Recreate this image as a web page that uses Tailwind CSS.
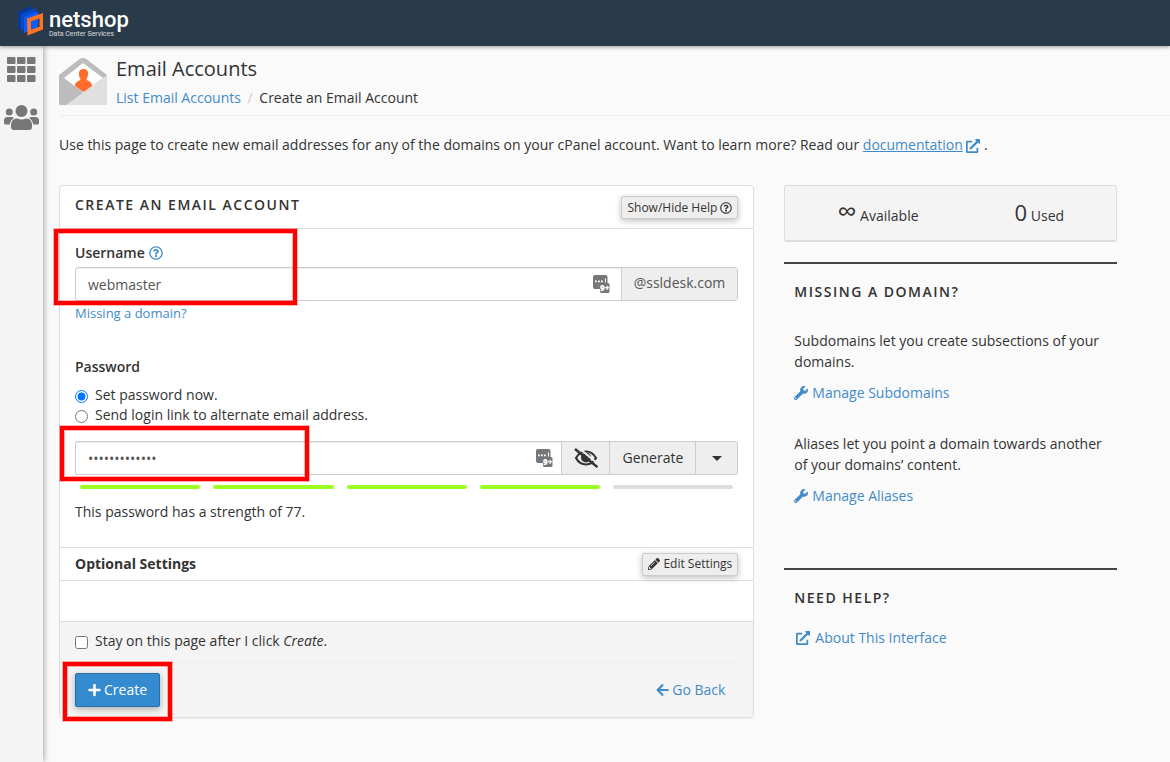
<!DOCTYPE html>
<html lang="en">
<head>
    <meta charset="UTF-8">
    <meta name="viewport" content="width=device-width, initial-scale=1.0">
    <title>Email Accounts</title>
    <script src="https://cdn.jsdelivr.net/npm/@tailwindcss/browser@4"></script>
</head>
<body class="min-h-screen flex flex-col bg-[#fafafa] font-['Open_Sans',sans-serif] text-sm leading-5 text-[#333]">

    <!-- shared icons -->
    <svg class="hidden">
        <symbol id="help" viewBox="0 0 512 512"><path d="M256 8C119.043 8 8 119.083 8 256c0 136.997 111.043 248 248 248s248-111.003 248-248C504 119.083 392.957 8 256 8zm0 448c-110.532 0-200-89.431-200-200 0-110.495 89.472-200 200-200 110.491 0 200 89.471 200 200 0 110.53-89.431 200-200 200zm107.244-255.2c0 67.052-72.421 68.084-72.421 92.863V300c0 6.627-5.373 12-12 12h-45.647c-6.627 0-12-5.373-12-12v-8.659c0-35.745 27.1-50.034 47.579-61.516 17.561-9.845 28.324-16.541 28.324-29.579 0-17.246-21.999-28.693-39.784-28.693-23.189 0-33.894 10.977-48.942 29.969-4.057 5.12-11.46 6.071-16.666 2.124l-27.824-21.098c-5.107-3.872-6.251-11.066-2.644-16.363C184.846 131.491 214.94 112 261.794 112c49.071 0 101.45 38.304 101.45 88.8zM298 368c0 23.159-18.841 42-42 42s-42-18.841-42-42 18.841-42 42-42 42 18.841 42 42z"/></symbol>
        <symbol id="external" viewBox="0 0 512 512"><path d="M432,320H400a16,16,0,0,0-16,16V448H64V128H208a16,16,0,0,0,16-16V80a16,16,0,0,0-16-16H48A48,48,0,0,0,0,112V464a48,48,0,0,0,48,48H400a48,48,0,0,0,48-48V336A16,16,0,0,0,432,320ZM488,0h-128c-21.37,0-32.05,25.91-17,41l35.73,35.73L135,320.37a24,24,0,0,0,0,34L157.67,377a24,24,0,0,0,34,0L435.28,133.32,471,169c15,15,41,4.5,41-17V24A24,24,0,0,0,488,0Z"/></symbol>
        <symbol id="wrench" viewBox="0 0 512 512"><path d="M507.73 109.1c-2.24-9.03-13.54-12.09-20.12-5.51l-74.36 74.36-67.88-11.31-11.31-67.88 74.36-74.36c6.62-6.62 3.43-17.9-5.66-20.16-47.38-11.74-99.55.91-136.58 37.93-39.64 39.64-50.55 97.1-34.05 147.2L18.74 402.76c-24.99 24.99-24.99 65.51 0 90.5 24.99 24.99 65.51 24.99 90.5 0l213.21-213.21c50.12 16.71 107.47 5.68 147.37-34.22 37.07-37.07 49.7-89.32 37.91-136.73zM64 472c-13.25 0-24-10.75-24-24 0-13.26 10.75-24 24-24s24 10.74 24 24c0 13.25-10.75 24-24 24z"/></symbol>
        <symbol id="vault" viewBox="0 0 17 18">
            <path fill="#777" d="M2 0h10.500a2 2 0 0 1 2 2v6h.5a1.500 1.500 0 0 1 1.500 1.500v7A1.500 1.500 0 0 1 15 18H8.500A1.500 1.500 0 0 1 7 16.500V14H2a2 2 0 0 1-2-2V2a2 2 0 0 1 2-2z"/>
            <path fill="#fff" d="M2 5.500h1.800v1.800H2zM5 5.500h1.800v1.800H5zM8 5.500h1.800v1.800H8zM12 3.500h1v4h-1z"/>
            <text x="7" y="15.500" fill="#fff" font-size="8" font-weight="800">9+</text>
        </symbol>
    </svg>

    <header class="relative z-20 h-[46px] flex items-center bg-[#293a4a] pl-[18px] shadow-[0_1px_4px_rgba(0,0,0,0.4)]">
        <a href="#" class="flex items-center gap-[6px] text-white font-['Roboto',sans-serif]">
            <svg class="w-[25px] h-[30px] mb-1" viewBox="0 0 25 30">
                <path fill="#073a9b" d="M0 5.500 14 0v17L0 23z"/>
                <path fill="#0648cc" d="M3 8 17.500 2v18L3 25z"/>
                <path fill="#0b5cff" d="M6 11 20 5v17L6 27z"/>
                <path fill="#ff7420" fill-rule="evenodd" d="M9 12.500 25 7v16.500L9.500 29.500zM13 15.200v8.600l8.500-3v-8.400z"/>
            </svg>
            <span class="flex flex-col">
                <span class="text-[22px] leading-[22px] font-medium">netshop</span>
                <span class="text-[7px] leading-[6px] text-white/80">Data Center Services</span>
            </span>
        </a>
    </header>

    <div class="flex flex-1">
        <nav class="relative z-10 w-[43px] shrink-0 flex flex-col items-center gap-[23px] pt-[11px] bg-[#f4f4f4] shadow-[1px_0_6px_rgba(0,0,0,0.35)] text-[#777]">
            <a href="#" aria-label="Tools">
                <svg class="w-[29px] h-[25px]" viewBox="0 0 29 25" fill="currentColor">
                    <rect width="8.500" height="7" rx="1"/><rect x="10" width="8.500" height="7" rx="1"/><rect x="20" width="8.500" height="7" rx="1"/>
                    <rect y="9" width="8.500" height="7" rx="1"/><rect x="10" y="9" width="8.500" height="7" rx="1"/><rect x="20" y="9" width="8.500" height="7" rx="1"/>
                    <rect y="18" width="8.500" height="7" rx="1"/><rect x="10" y="18" width="8.500" height="7" rx="1"/><rect x="20" y="18" width="8.500" height="7" rx="1"/>
                </svg>
            </a>
            <a href="#" aria-label="User Manager">
                <svg class="w-[35px] h-[25px]" viewBox="0 0 35 25" fill="currentColor">
                    <circle cx="17.500" cy="6" r="6"/><circle cx="5.300" cy="7" r="3.500"/><circle cx="29.700" cy="7" r="3.500"/>
                    <path d="M13 13.500c3 1.400 6 1.400 9 0 4 0 6 3 6 7v1.500a3 3 0 0 1-3 3H10a3 3 0 0 1-3-3v-1.500c0-4 2-7 6-7z"/>
                    <path d="M3.500 12h3.600c1.200 0 2.200.5 2.900 1.300-2.400 1.300-3.900 3.300-4.300 6.200H1.500A1.500 1.500 0 0 1 0 18v-2.500A3.500 3.500 0 0 1 3.500 12zM31.500 12h-3.600c-1.200 0-2.200.5-2.900 1.300 2.400 1.300 3.900 3.300 4.300 6.200h4.200A1.500 1.500 0 0 0 35 18v-2.500a3.500 3.500 0 0 0-3.500-3.500z"/>
                </svg>
            </a>
        </nav>

        <main class="flex-1 pl-4">
            <div class="flex gap-[9px] pt-3 border-b border-[#eee]">
                <svg class="w-12 h-[47px] shrink-0" viewBox="0 0 48 47">
                    <path fill="#bcbcbc" d="M0 17 20 1.500q4-2.800 8 0L48 17v28q0 2-2 2H2q-2 0-2-2z"/>
                    <path fill="#fff" d="M5 20 24 5 44 20 24 35z"/>
                    <path fill="#e0e0e0" d="M48 17v28q0 2-2 2H7z"/>
                    <path fill="#bcbcbc" d="M0 17 24 34 7 47H2q-2 0-2-2z"/>
                    <path fill="#ff6c2c" d="M24.500 11c3.500 0 5 2.500 4.500 6-.2 2-1 3-1.500 4 0 2 5 2 5.500 6v1l-8.500 6L16 28v-1c.5-4 5.500-4 5.500-6-.7-1-1.300-2-1.500-4-.5-3.500 1-6 4.500-6z"/>
                </svg>
                <div class="pb-[5px]">
                    <h1 class="text-xl leading-[22px]">Email Accounts</h1>
                    <nav class="mt-2 mb-[2px]">
                        <a href="#" class="text-[#428bca]">List Email Accounts</a>
                        <span class="px-[3px] text-[#ccc]">/</span>
                        <span>Create an Email Account</span>
                    </nav>
                </div>
            </div>

            <p class="mt-[19px] mb-[30px]">Use this page to create new email addresses for any of the domains on your cPanel account. Want to learn more? Read our <a href="#" class="text-[#428bca]"><span class="underline">documentation</span> <svg class="inline w-[14px] h-[14px]" fill="currentColor"><use href="#external"/></svg></a> .</p>

            <div class="grid grid-cols-3 items-start gap-[30px] mr-[53px]">
                <form class="col-span-2 bg-white border border-[#ddd] rounded-sm shadow-[0_1px_1px_rgba(0,0,0,0.05)]">
                    <div class="flex justify-between px-[15px] py-[10px] border-b border-[#ddd]">
                        <h2 class="font-semibold tracking-[1.5px] leading-[18px]">CREATE AN EMAIL ACCOUNT</h2>
                        <button type="button" class="flex items-center gap-[3px] h-[23px] px-[5px] mb-[-1px] border border-[#ccc] rounded-[2px] bg-[#eee] text-xs shadow-[0_2px_6px_rgba(0,0,0,0.25)]">Show/Hide Help <svg class="w-3 h-3" fill="currentColor"><use href="#help"/></svg></button>
                    </div>

                    <div class="px-[15px] pt-[14px] pb-[25px]">
                        <div class="relative">
                            <label for="username" class="flex items-center gap-1 mb-1 font-semibold">Username <svg class="w-[14px] h-[14px] text-[#428bca]" fill="currentColor"><use href="#help"/></svg></label>
                            <div class="flex h-[34px] border border-[#ccc] rounded-[3px] bg-white text-[#555] shadow-[inset_0_1px_1px_rgba(0,0,0,0.075)]">
                                <input id="username" type="text" value="webmaster" class="flex-1 min-w-0 px-3 pt-px outline-none">
                                <svg class="w-[17px] h-[18px] self-center mr-[11px]"><use href="#vault"/></svg>
                                <span class="px-3 leading-[30px] border-l border-[#ccc] bg-[#eee] rounded-r-[2px]">@ssldesk.com</span>
                            </div>
                            <span class="absolute -left-[21px] -top-[14px] w-[243px] h-[76px] border-4 border-[#f00] shadow-[0_0_0_1px_rgba(255,0,0,0.3),inset_0_0_0_1px_rgba(255,0,0,0.3)] pointer-events-none"></span>
                        </div>
                        <a href="#" class="block mt-[2px] text-[13px] text-[#428bca]">Missing a domain?</a>

                        <fieldset class="mt-[34px]">
                            <legend class="font-semibold mb-2">Password</legend>
                            <label class="flex items-center gap-[7px]"><input type="radio" name="mode" checked class="w-[13px] h-[13px] mt-[3px]">Set password now.</label>
                            <label class="flex items-center gap-[7px]"><input type="radio" name="mode" class="w-[13px] h-[13px] mt-[3px]">Send login link to alternate email address.</label>
                        </fieldset>

                        <div class="relative mt-4">
                            <div class="flex h-[34px] border border-[#ccc] rounded-[2px] shadow-[inset_0_1px_1px_rgba(0,0,0,0.075)]">
                                <input type="password" aria-label="Password" value="abcdefghijklm" class="flex-1 min-w-0 px-3 pt-px text-[#555] outline-none">
                                <svg class="w-[17px] h-[18px] self-center mr-2"><use href="#vault"/></svg>
                                <button type="button" aria-label="Show password" class="w-12 flex justify-center items-center border-l border-[#ccc] bg-[#eee]">
                                    <svg class="w-6 h-5" viewBox="0 0 24 20" fill="none">
                                        <path stroke="#333" stroke-width="2.200" d="M2 10C4.500 5.500 8 3.500 12 3.500S19.500 5.500 22 10c-2.500 4.500-6 6.500-10 6.500S4.500 14.500 2 10z"/>
                                        <circle cx="12" cy="9.500" r="5" fill="#333"/>
                                        <path stroke="#eee" stroke-width="1.300" d="M12.200 6.500q2.800.3 3 3.200"/>
                                        <path stroke="#eee" stroke-width="2" d="m3.500-1 21.500 17.500"/>
                                        <path stroke="#333" stroke-width="2.400" d="M1 1 23.300 19"/>
                                    </svg>
                                </button>
                                <button type="button" class="px-3 border-l border-[#ccc] bg-[#eee]">Generate</button>
                                <button type="button" aria-label="Password options" class="w-[42px] flex justify-center items-center border-l border-[#ccc] bg-[#eee]"><svg class="w-[10px] h-[5px]" viewBox="0 0 10 5"><path fill="#333" d="M0 0h10L5 5z"/></svg></button>
                            </div>
                            <span class="absolute -left-[15px] -top-[15px] w-[249px] h-[55px] border-4 border-[#f00] shadow-[0_0_0_1px_rgba(255,0,0,0.3),inset_0_0_0_1px_rgba(255,0,0,0.3)] pointer-events-none"></span>
                        </div>

                        <div class="flex gap-[13px] px-[5px] mt-[10px] mb-[13px]">
                            <span class="flex-1 h-1 rounded-full bg-[#9cff24]"></span>
                            <span class="flex-1 h-1 rounded-full bg-[#9cff24]"></span>
                            <span class="flex-1 h-1 rounded-full bg-[#9cff24]"></span>
                            <span class="flex-1 h-1 rounded-full bg-[#9cff24]"></span>
                            <span class="flex-1 h-1 rounded-full bg-[#ddd]"></span>
                        </div>
                        <p>This password has a strength of 77.</p>
                    </div>

                    <div class="h-[34px] flex items-center justify-between px-[15px] border-y border-[#ddd]">
                        <h3 class="font-bold">Optional Settings</h3>
                        <button type="button" class="flex items-center gap-[3px] h-[23px] px-[5px] border border-[#ccc] rounded-[2px] bg-[#eee] text-xs shadow-[0_2px_6px_rgba(0,0,0,0.25)]">
                            <svg class="w-3 h-3" viewBox="0 0 512 512" fill="currentColor"><path d="M497.900 142.100l-46.100 46.100c-4.700 4.700-12.300 4.700-17 0l-111-111c-4.700-4.700-4.700-12.300 0-17l46.100-46.100c18.700-18.700 49.100-18.700 67.900 0l60.100 60.100c18.800 18.700 18.800 49.100 0 67.900zM284.200 99.800L21.600 362.400.4 483.900c-2.900 16.400 11.400 30.600 27.800 27.800l121.500-21.300 262.600-262.600c4.700-4.700 4.700-12.300 0-17l-111-111c-4.800-4.700-12.400-4.700-17.100 0zM124.100 339.900c-5.500-5.500-5.500-14.300 0-19.800l154-154c5.500-5.500 14.300-5.500 19.800 0s5.500 14.300 0 19.800l-154 154c-5.500 5.500-14.300 5.500-19.800 0zM88 424h48v36.300l-64.500 11.300-31.100-31.100L51.700 376H88v48z"/></svg>
                            Edit Settings
                        </button>
                    </div>
                    <div class="h-10"></div>

                    <div class="px-[15px] pt-[9px] pb-[10px] border-t border-[#ddd] bg-[#f4f4f4]">
                        <label class="flex items-center gap-[7px]"><input type="checkbox" class="w-[13px] h-[13px] mt-[3px]"><span>Stay on this page after I click <em>Create</em>.</span></label>
                        <div class="flex items-center justify-between mt-[11px] pt-[10px] border-t border-[#eee]">
                            <div class="relative">
                                <button type="button" class="flex items-center gap-[3px] h-[34px] px-3 border border-[#2a6ea5] rounded-[2px] bg-[#358bd0] text-white shadow-[0_2px_6px_rgba(0,0,0,0.3)]">
                                    <svg class="w-[13px] h-[14px]" viewBox="0 0 448 512" fill="currentColor"><path d="M416 208H272V64c0-17.670-14.330-32-32-32h-32c-17.670 0-32 14.330-32 32v144H32c-17.670 0-32 14.330-32 32v32c0 17.670 14.330 32 32 32h144v144c0 17.670 14.330 32 32 32h32c17.670 0 32-14.330 32-32V304h144c17.670 0 32-14.330 32-32v-32c0-17.670-14.330-32-32-32z"/></svg>
                                    Create
                                </button>
                                <span class="absolute -left-3 -top-[11px] w-[109px] h-[59px] border-4 border-[#f00] shadow-[0_0_0_1px_rgba(255,0,0,0.3),inset_0_0_0_1px_rgba(255,0,0,0.3)] pointer-events-none"></span>
                            </div>
                            <a href="#" class="flex items-center gap-[3px] px-[13px] text-[#428bca]">
                                <svg class="w-[13px] h-[14px]" viewBox="0 0 448 512" fill="currentColor"><path d="M257.500 445.100l-22.200 22.200c-9.400 9.400-24.600 9.400-33.900 0L7 273c-9.400-9.400-9.400-24.600 0-33.900L201.400 44.700c9.400-9.400 24.600-9.400 33.900 0l22.200 22.200c9.500 9.500 9.300 25-.4 34.300L136.600 216H424c13.300 0 24 10.700 24 24v32c0 13.300-10.700 24-24 24H136.600l120.500 114.800c9.800 9.300 10 24.800.4 34.300z"/></svg>
                                Go Back
                            </a>
                        </div>
                    </div>
                </form>

                <aside>
                    <div class="h-[57px] grid grid-cols-2 items-baseline pt-[10px] px-2 border border-[#ddd] border-b-2 rounded-[3px] bg-[#f4f4f4] text-center">
                        <span class="pl-3"><span class="text-[27px] leading-[30px]">∞</span> Available</span>
                        <span class="pl-5"><span class="text-[22px] leading-[30px]">0</span> Used</span>
                    </div>

                    <section class="mt-5 h-[306px] px-[10px] pt-[19px] border-t-2 border-[#444]">
                        <h2 class="font-semibold tracking-[1.5px] leading-[18px]">MISSING A DOMAIN?</h2>
                        <p class="mt-[29px] leading-[21px]">Subdomains let you create subsections of your domains.</p>
                        <a href="#" class="flex items-center gap-1 mt-[10px] leading-[21px] text-[#428bca]"><svg class="w-[14px] h-[14px]" fill="currentColor"><use href="#wrench"/></svg>Manage Subdomains</a>
                        <p class="mt-[30px] leading-[21px]">Aliases let you point a domain towards another of your domains’ content.</p>
                        <a href="#" class="flex items-center gap-1 mt-[10px] leading-[21px] text-[#428bca]"><svg class="w-[14px] h-[14px]" fill="currentColor"><use href="#wrench"/></svg>Manage Aliases</a>
                    </section>

                    <section class="px-[10px] pt-[19px] border-t-2 border-[#444]">
                        <h2 class="font-semibold tracking-[1.5px] leading-[18px]">NEED HELP?</h2>
                        <a href="#" class="flex items-center gap-[5px] mt-5 pl-[2px] leading-[21px] text-[#428bca]"><svg class="w-[14px] h-[14px]" fill="currentColor"><use href="#external"/></svg>About This Interface</a>
                    </section>
                </aside>
            </div>
        </main>
    </div>
</body>
</html>
